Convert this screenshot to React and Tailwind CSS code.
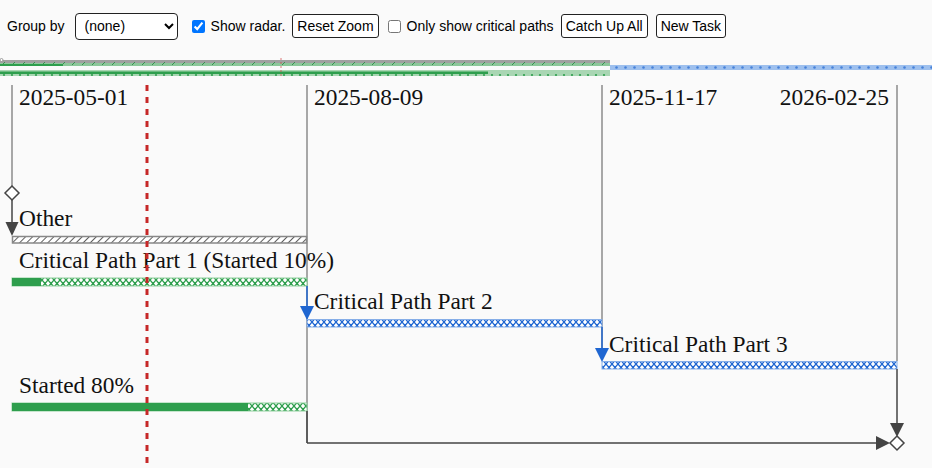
import React, { useState } from 'react';

const GREEN = '#2e9e4d';
const BLUE = '#1f66d1';
const DARK = '#444';

function Toolbar() {
  const [radar, setRadar] = useState(true);
  const [critical, setCritical] = useState(false);

  return (
    <div className="flex items-center h-[52px] pl-[7px] text-[14px] text-black font-['Liberation_Sans',Arial,sans-serif]">
      <span>Group by</span>
      <select className="ml-[10px] w-[103px] h-[27px] border border-[#222] rounded-[4px] bg-white pl-[5px] text-[14px]">
        <option>(none)</option>
      </select>
      <input
        type="checkbox"
        checked={radar}
        onChange={() => setRadar(!radar)}
        className="ml-[14px] w-[13px] h-[13px] accent-[#0075ff]"
      />
      <span className="ml-[6px]">Show radar.</span>
      <button className="ml-[7px] h-[24px] px-[4px] border border-[#222] rounded-[3px] bg-white">Reset Zoom</button>
      <input
        type="checkbox"
        checked={critical}
        onChange={() => setCritical(!critical)}
        className="ml-[9px] w-[13px] h-[13px]"
      />
      <span className="ml-[6px]">Only show critical paths</span>
      <button className="ml-[7px] h-[24px] px-[4px] border border-[#222] rounded-[3px] bg-white">Catch Up All</button>
      <button className="ml-[8px] h-[24px] px-[4px] border border-[#222] rounded-[3px] bg-white">New Task</button>
    </div>
  );
}

function Patterns() {
  return (
    <defs>
      <pattern id="hatch" width="5" height="5" patternUnits="userSpaceOnUse" patternTransform="rotate(45)">
        <rect width="5" height="5" fill="#fff" />
        <line x1="0" y1="0" x2="0" y2="5" stroke="#333" strokeWidth="1.6" />
      </pattern>
      <pattern id="greenx" width="6" height="7" patternUnits="userSpaceOnUse">
        <rect width="6" height="7" fill="#fff" />
        <path d="M0 0 L3 3.5 L0 7 M6 0 L3 3.5 L6 7" stroke={GREEN} strokeWidth="1.3" fill="none" />
      </pattern>
      <pattern id="bluex" width="6" height="7" patternUnits="userSpaceOnUse">
        <rect width="6" height="7" fill="#fff" />
        <path d="M0 0 L3 3.5 L0 7 M6 0 L3 3.5 L6 7" stroke={BLUE} strokeWidth="1.3" fill="none" />
      </pattern>
      <pattern id="radargray" width="10" height="6" patternUnits="userSpaceOnUse">
        <rect width="10" height="6" fill="#a0a0a0" />
        <rect y="3" width="10" height="3" fill="#8cc79a" />
        <path d="M2 5 L5 2" stroke="#3a8f50" strokeWidth="1" />
      </pattern>
      <pattern id="radarblue" width="9" height="5" patternUnits="userSpaceOnUse">
        <rect width="9" height="5" fill="#9ec0ee" />
        <circle cx="4.5" cy="2.5" r="1.3" fill={BLUE} opacity="0.7" />
      </pattern>
      <pattern id="radargreen" width="8" height="6" patternUnits="userSpaceOnUse">
        <rect width="8" height="6" fill="#a9d6b3" />
        <circle cx="4" cy="3" r="1.1" fill={GREEN} />
      </pattern>
    </defs>
  );
}

function Radar() {
  return (
    <svg width="932" height="28" viewBox="0 52 932 28" className="block">
      <Patterns />
      <rect x="0" y="60" width="610" height="6" fill="url(#radargray)" />
      <rect x="0" y="64" width="63" height="2" fill={GREEN} />
      <rect x="610" y="65" width="322" height="5" fill="url(#radarblue)" />
      <rect x="0" y="70" width="610" height="6" fill="url(#radargreen)" />
      <rect x="0" y="71.5" width="488" height="2.5" fill={GREEN} />
      <circle cx="1.5" cy="60" r="1.5" fill="#fff" stroke="#888" strokeWidth="0.8" />
      <line x1="281" y1="58" x2="281" y2="78" stroke="#d04040" strokeWidth="1" strokeDasharray="2 2" opacity="0.7" />
    </svg>
  );
}

function Chart() {
  return (
    <svg width="932" height="388" viewBox="0 80 932 388" className="block">
      <Patterns />

      {/* grid */}
      <line x1="12" y1="85" x2="12" y2="187" stroke="#555" strokeWidth="1" />
      <line x1="307" y1="85" x2="307" y2="443" stroke="#555" strokeWidth="1" />
      <line x1="602" y1="85" x2="602" y2="348" stroke="#555" strokeWidth="1" />
      <line x1="897" y1="85" x2="897" y2="361" stroke="#555" strokeWidth="1" />

      <g fill="#111" fontSize="23.4" fontFamily="'Liberation Serif', 'Times New Roman', serif">
        <text x="19" y="105">2025-05-01</text>
        <text x="314" y="105">2025-08-09</text>
        <text x="609" y="105">2025-11-17</text>
        <text x="889" y="105" textAnchor="end">2026-02-25</text>
        <text x="19" y="226">Other</text>
        <text x="19" y="268">Critical Path Part 1 (Started 10%)</text>
        <text x="314" y="309">Critical Path Part 2</text>
        <text x="609" y="352">Critical Path Part 3</text>
        <text x="19" y="393">Started 80%</text>
      </g>

      {/* start milestone */}
      <line x1="12" y1="200" x2="12" y2="224" stroke={DARK} strokeWidth="1.5" />
      <polygon points="12,186 19,193 12,200 5,193" fill="#fff" stroke={DARK} strokeWidth="1.5" />
      <polygon points="5.5,222 18.5,222 12,236" fill={DARK} />

      {/* Other */}
      <rect x="12.5" y="236.5" width="294" height="6.5" fill="url(#hatch)" stroke="#888" strokeWidth="1.5" />

      {/* Critical Path Part 1 */}
      <rect x="12" y="278" width="295" height="8" fill="url(#greenx)" stroke="#8fcf9d" strokeWidth="1" />
      <rect x="12" y="278" width="29" height="8" fill={GREEN} />

      {/* Critical Path Part 2 */}
      <line x1="307" y1="286" x2="307" y2="308" stroke={BLUE} strokeWidth="1.5" />
      <polygon points="300,306 314,306 307,320" fill={BLUE} />
      <rect x="307" y="319.5" width="295" height="7.5" fill="url(#bluex)" stroke="#86aee8" strokeWidth="1" />

      {/* Critical Path Part 3 */}
      <line x1="602" y1="327" x2="602" y2="350" stroke={BLUE} strokeWidth="1.5" />
      <polygon points="595,348 609,348 602,362" fill={BLUE} />
      <rect x="602" y="361.5" width="295" height="7.5" fill="url(#bluex)" stroke="#86aee8" strokeWidth="1" />

      {/* Started 80% */}
      <rect x="12" y="403" width="295" height="8" fill="url(#greenx)" stroke="#8fcf9d" strokeWidth="1" />
      <rect x="12" y="403" width="236" height="8" fill={GREEN} />

      {/* end milestone */}
      <line x1="307" y1="411" x2="307" y2="443" stroke={DARK} strokeWidth="1.5" />
      <line x1="307" y1="443" x2="878" y2="443" stroke={DARK} strokeWidth="1.5" />
      <polygon points="876,436 876,450 890,443" fill={DARK} />
      <line x1="897" y1="369" x2="897" y2="425" stroke={DARK} strokeWidth="1.5" />
      <polygon points="890,423 904,423 897,437" fill={DARK} />
      <polygon points="897,436 904,443 897,450 890,443" fill="#fff" stroke={DARK} strokeWidth="1.5" />

      {/* today */}
      <line x1="147" y1="85" x2="147" y2="468" stroke="#c62828" strokeWidth="3" strokeDasharray="6 6" />
    </svg>
  );
}

export default function App() {
  return (
    <div className="w-[932px] h-[468px] overflow-hidden bg-[#fafafa]">
      <Toolbar />
      <Radar />
      <Chart />
    </div>
  );
}
